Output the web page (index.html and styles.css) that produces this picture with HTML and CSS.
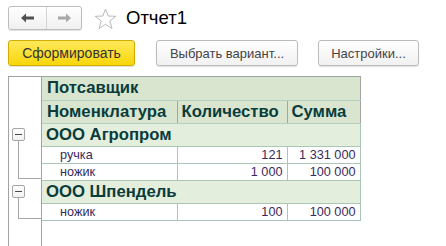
FILE: index.html
```html
<!DOCTYPE html>
<html lang="ru">
<head>
<meta charset="utf-8">
<title>Отчет1</title>
<link rel="stylesheet" href="styles.css">
</head>
<body>
<div class="page">
  <div class="toolbar">
    <div class="nav">
      <button class="nav-btn" type="button" aria-label="Назад">
        <svg width="13" height="10" viewBox="0 0 13 10"><path d="M0 5 L5 0.5 L5 3.5 L13 3.5 L13 6.5 L5 6.5 L5 9.5 Z" fill="#505050"/></svg>
      </button>
      <button class="nav-btn nav-btn-fwd" type="button" aria-label="Вперёд">
        <svg width="13" height="10" viewBox="0 0 13 10"><path d="M13 5 L8 0.5 L8 3.5 L0 3.5 L0 6.5 L8 6.5 L8 9.5 Z" fill="#a8a8a8"/></svg>
      </button>
    </div>
    <svg class="star" width="23" height="22" viewBox="0 0 23 22"><path d="M11.5 1 L14.2 8 L21.8 8.3 L15.8 13 L18 20.6 L11.5 16.3 L5 20.6 L7.2 13 L1.2 8.3 L8.8 8 Z" fill="none" stroke="#b9b9b9" stroke-width="1"/></svg>
    <h1 class="title">Отчет1</h1>
  </div>

  <div class="actions">
    <button class="btn btn-primary" type="button">Сформировать</button>
    <button class="btn btn-variant" type="button">Выбрать вариант...</button>
    <button class="btn btn-settings" type="button">Настройки...</button>
  </div>

  <div class="report">
    <div class="gutter">
      <div class="gutter-head"></div>
      <div class="tree-group tree-group-1">
        <span class="tree-box"></span>
        <span class="tree-line"></span>
      </div>
      <div class="tree-group tree-group-2">
        <span class="tree-box"></span>
        <span class="tree-line"></span>
      </div>
    </div>
    <table class="grid">
      <colgroup>
        <col class="c1"><col class="c2"><col class="c3">
      </colgroup>
      <tr class="head head-top"><th colspan="3">Потсавщик</th></tr>
      <tr class="head head-cols"><th>Номенклатура</th><th>Количество</th><th>Сумма</th></tr>
      <tr class="group"><td colspan="3">ООО Агропром</td></tr>
      <tr class="row"><td class="name">ручка</td><td class="num">121</td><td class="num">1 331 000</td></tr>
      <tr class="row"><td class="name">ножик</td><td class="num">1 000</td><td class="num">100 000</td></tr>
      <tr class="group"><td colspan="3">ООО Шпендель</td></tr>
      <tr class="row"><td class="name">ножик</td><td class="num">100</td><td class="num">100 000</td></tr>
    </table>
  </div>
</div>
</body>
</html>
```

FILE: styles.css
```css
* { box-sizing: border-box; }

html, body {
  margin: 0;
  padding: 0;
  background: #ffffff;
}

body {
  font-family: "Liberation Sans", Arial, sans-serif;
  width: 446px;
  height: 246px;
  overflow: hidden;
}

.page {
  display: flex;
  flex-direction: column;
  height: 246px;
}

/* top toolbar */
.toolbar {
  display: flex;
  align-items: center;
  padding: 6px 0 0 8px;
  height: 30px;
}

.nav {
  display: flex;
  height: 24px;
  border: 1px solid #bdbdbd;
  border-radius: 3px;
  background: linear-gradient(#ffffff, #f0f0f0);
  box-shadow: 0 1px 0 #e2e2e2;
}

.nav-btn {
  display: flex;
  align-items: center;
  justify-content: center;
  width: 37px;
  height: 22px;
  padding: 0;
  border: 0;
  background: transparent;
}

.nav-btn-fwd {
  width: 35px;
  border-left: 1px solid #d4d4d4;
}

.star {
  margin-left: 12px;
  margin-top: 1px;
}

.title {
  margin: 0 0 0 9px;
  font-size: 18.5px;
  font-weight: normal;
  color: #000000;
  line-height: 22px;
}

/* action buttons */
.actions {
  display: flex;
  gap: 21px;
  padding-left: 8px;
  margin-top: 10px;
}

.btn {
  height: 26px;
  padding: 0;
  font-family: "Liberation Sans", Arial, sans-serif;
  font-size: 13px;
  color: #444444;
  border: 1px solid #bcbcbc;
  border-radius: 3px;
  background: linear-gradient(#ffffff, #f1f1f1);
  box-shadow: 0 1px 1px rgba(0, 0, 0, 0.12);
}

.btn-primary {
  width: 127px;
  font-size: 14px;
  color: #333333;
  border-color: #d0ad00;
  background: linear-gradient(#ffe95a, #f8d60a);
}

.btn-variant { width: 142px; }

.btn-settings {
  width: 101px;
  margin-left: -1px;
}

/* report */
.report {
  display: flex;
  align-self: flex-start;
  margin: 10px 0 0 8px;
  flex: 1;
  border-top: 1px solid #a3a3a3;
}

.gutter {
  display: flex;
  flex-direction: column;
  width: 34px;
  border-left: 1px solid #a3a3a3;
  border-right: 1px solid #a3a3a3;
}

.gutter-head { height: 46px; }

.tree-group {
  display: flex;
  flex-direction: column;
}

.tree-group-1 { height: 57px; }
.tree-group-2 { height: 40px; }

.tree-box {
  position: relative;
  width: 13px;
  height: 13px;
  margin: 5px 0 0 3px;
  border: 1px solid #a6a6a6;
  border-radius: 2px;
  background: linear-gradient(#ffffff, #f2f2f2);
}

.tree-box::after {
  content: "";
  position: absolute;
  left: 2px;
  right: 2px;
  top: 5px;
  height: 1px;
  background: #4a4a4a;
}

.tree-line {
  flex: 1;
  width: 23px;
  margin: 0 0 1px 9px;
  border-left: 1px solid #a6a6a6;
  border-bottom: 1px solid #a6a6a6;
}

.grid {
  border-collapse: collapse;
  table-layout: fixed;
  width: 318px;
  align-self: flex-start;
}

.c1 { width: 135px; }
.c2 { width: 110px; }
.c3 { width: 73px; }

.grid th,
.grid td {
  padding: 0;
  white-space: nowrap;
  overflow: hidden;
}

.head th {
  height: 23px;
  text-align: left;
  padding-left: 5px;
  font-size: 16.7px;
  font-weight: bold;
  color: #0a3c3c;
  background: #d9e5cf;
  border-right: 1px solid #a3a3a3;
  border-bottom: 1px solid #b7cdbd;
}

.head-cols th { padding-left: 4px; }
.head-cols th:first-child { padding-left: 5px; }

.group td {
  height: 23px;
  padding-left: 4px;
  font-size: 16.7px;
  font-weight: bold;
  color: #0a3c3c;
  background: #e4eedc;
  border-right: 1px solid #a9c6b6;
  border-bottom: 1px solid #a9c6b6;
}

.row td {
  height: 17px;
  font-size: 12.7px;
  color: #3a2a5c;
  border-right: 1px solid #a9c6b6;
  border-bottom: 1px solid #a9c6b6;
}

.row .name { padding-left: 18px; }

.row .num {
  text-align: right;
  padding-right: 4px;
}
```
